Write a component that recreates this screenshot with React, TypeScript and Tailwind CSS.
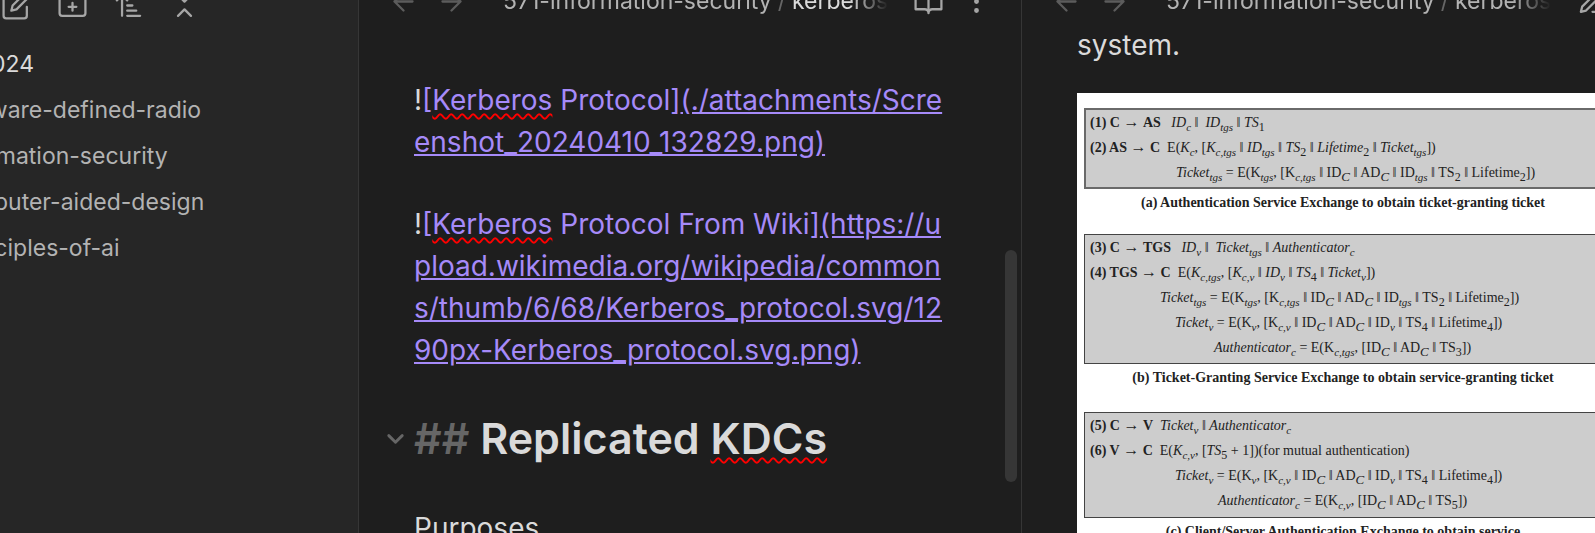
import type { ReactNode } from 'react';

const Icon = ({ children }: { children: ReactNode }) => (
  <svg
    viewBox="0 0 24 24"
    fill="none"
    stroke="currentColor"
    strokeWidth="1.75"
    strokeLinecap="round"
    strokeLinejoin="round"
    className="size-[31px] shrink-0"
    aria-hidden="true"
  >
    {children}
  </svg>
);

const IconButton = ({ label, faint, children }: { label: string; faint?: boolean; children: ReactNode }) => (
  <button type="button" aria-label={label} className={faint ? 'text-[#5c5c5c]' : 'text-[#a6a6a6]'}>
    <Icon>{children}</Icon>
  </button>
);

const folders = [
  '541-software-defined-radio',
  '571-information-security',
  '551-computer-aided-design',
  '520-principles-of-ai',
];

function Sidebar() {
  return (
    <aside className="w-[359px] shrink-0 overflow-hidden border-r border-[#363636] bg-[#262626]">
      <div className="-mt-[10px] flex gap-[25px] pl-px">
        <IconButton label="New note">
          <path d="M11 4H4a2 2 0 0 0-2 2v14a2 2 0 0 0 2 2h14a2 2 0 0 0 2-2v-7" />
          <path d="M18.5 2.5a2.12 2.12 0 0 1 3 3L12 15l-4 1 1-4Z" />
        </IconButton>
        <IconButton label="New folder">
          <path d="M4 20h16a2 2 0 0 0 2-2V8a2 2 0 0 0-2-2h-7.93a2 2 0 0 1-1.66-.9l-.82-1.2A2 2 0 0 0 7.93 3H4a2 2 0 0 0-2 2v13c0 1.1.9 2 2 2Z" />
          <path d="M12 10v6M9 13h6" />
        </IconButton>
        <IconButton label="Change sort order">
          <path d="m3 8 4-4 4 4M7 4v16M11 12h4M11 16h7M11 20h10" />
        </IconButton>
        <IconButton label="Collapse all">
          <path d="m7 20 5-5 5 5M7 4l5 5 5-5" />
        </IconButton>
      </div>
      <nav className="mt-5 text-[23px] whitespace-nowrap text-[#b3b3b3]">
        <a href="#2024" className="-ml-[23px] flex h-[46px] items-center text-[#dadada]">
          2024
        </a>
        <ul className="-ml-[101px]">
          {folders.map((name) => (
            <li key={name}>
              <a href={`#${name}`} className="flex h-[46px] items-center">
                {name}
              </a>
            </li>
          ))}
        </ul>
      </nav>
    </aside>
  );
}

function PaneHeader({ active, children }: { active?: boolean; children: ReactNode }) {
  return (
    <header className="-mt-[23px] flex h-12 shrink-0 items-center pr-[29px] pl-[29px]">
      <div className="flex gap-[17px]">
        <IconButton label="Back" faint>
          <path d="m12 19-7-7 7-7M19 12H5" />
        </IconButton>
        <IconButton label="Forward" faint>
          <path d="m12 5 7 7-7 7M5 12h14" />
        </IconButton>
      </div>
      <div className="ml-9 w-[385px] overflow-hidden mask-r-from-90% text-[23px] whitespace-nowrap text-[#b3b3b3]">
        <a href="#571">571-information-security</a>
        <span className="mx-1.5 text-[#666666]">/</span>
        <span className={active ? 'text-[#dadada]' : 'text-[#b3b3b3]'}>kerberos</span>
      </div>
      <div className="ml-auto flex gap-[17px]">
        {children}
        <IconButton label="More options">
          <circle cx="12" cy="12" r="1" />
          <circle cx="12" cy="5" r="1" />
          <circle cx="12" cy="19" r="1" />
        </IconButton>
      </div>
    </header>
  );
}

const Misspelled = ({ children }: { children: ReactNode }) => (
  <span className="underline decoration-[#ff0000] decoration-wavy decoration-[2px] underline-offset-3 [text-decoration-skip-ink:none]">
    {children}
  </span>
);

function EditorPane() {
  return (
    <section className="relative flex min-w-[663px] flex-1 flex-col overflow-hidden border-r border-[#363636]">
      <PaneHeader active>
        <IconButton label="Reading view">
          <path d="M2 3h6a4 4 0 0 1 4 4v14a3 3 0 0 0-3-3H2zM22 3h-6a4 4 0 0 0-4 4v14a3 3 0 0 1 3-3h7z" />
        </IconButton>
      </PaneHeader>
      <div className="pt-[54px] pr-[74px] pl-[55px] text-[28px] leading-[42px] whitespace-nowrap">
        <p>
          !
          <span className="text-[#a68af9]">
            [<Misspelled>Kerberos</Misspelled> Protocol]
            <a href="#attachment" className="underline">
              (./attachments/Scre
              <br />
              enshot_20240410_132829.png)
            </a>
          </span>
        </p>
        <p className="mt-10">
          !
          <span className="text-[#a68af9]">
            [<Misspelled>Kerberos</Misspelled> Protocol From Wiki]
            <a href="#wiki" className="underline">
              (https://u
              <br />
              pload.wikimedia.org/wikipedia/common
              <br />
              s/thumb/6/68/Kerberos_protocol.svg/12
              <br />
              90px-Kerberos_protocol.svg.png)
            </a>
          </span>
        </p>
        <div className="mt-10 -ml-[30px] flex items-center">
          <button type="button" aria-label="Fold section" className="mr-[7px] text-[#666666]">
            <svg viewBox="0 0 24 24" fill="none" stroke="currentColor" strokeWidth="3" strokeLinecap="round" strokeLinejoin="round" className="size-[23px]" aria-hidden="true">
              <path d="m5 9 7 7 7-7" />
            </svg>
          </button>
          <h2 className="text-[43px] leading-[54px] font-semibold">
            <span className="text-[#666666]">##</span> Replicated <Misspelled>KDCs</Misspelled>
          </h2>
        </div>
        <p className="mt-[42px]">Purposes</p>
      </div>
      <div className="absolute top-[250px] right-1 h-[232px] w-3 rounded-md bg-[#363636]" />
    </section>
  );
}

// Notation: *bold*, /italic/, _{italic subscript}, ^{upright subscript}, ~{large italic subscript}
const TOKEN = /(→|\*[^*]+\*|\/[^/]+\/|[_^~]\{[^}]+\})/;

function Formula({ text }: { text: string }) {
  return (
    <>
      {text.split(TOKEN).map((part, i) => {
        if (part === '→') return <b key={i} className="text-[16px] leading-none">→</b>;
        if (part.startsWith('*')) return <b key={i}>{part.slice(1, -1)}</b>;
        if (part.startsWith('/')) return <i key={i}>{part.slice(1, -1)}</i>;
        if (part.startsWith('_{'))
          return <i key={i} className="align-[-4px] text-[11px] leading-none">{part.slice(2, -1)}</i>;
        if (part.startsWith('~{'))
          return <i key={i} className="align-[-4px] text-[13px] leading-none">{part.slice(2, -1)}</i>;
        if (part.startsWith('^{'))
          return <span key={i} className="align-[-4px] text-[12px] leading-none">{part.slice(2, -1)}</span>;
        return part;
      })}
    </>
  );
}

type Row = { text: string; indent: string };

const exchanges: { rows: Row[]; caption: string; box: string }[] = [
  {
    box: 'mt-[15px] border-2 border-[#6a6a6a] pb-[2px]',
    caption: '(a) Authentication Service Exchange to obtain ticket-granting ticket',
    rows: [
      { indent: 'pl-1', text: '*(1) C* → *AS*   /ID/_{c} ‖  /ID/_{tgs} ‖ /TS/^{1}' },
      { indent: 'pl-1', text: '*(2) AS* → *C*  E(/K/_{c}, [/K/_{c,tgs} ‖ /ID/_{tgs} ‖ /TS/^{2} ‖ /Lifetime/^{2} ‖ /Ticket/_{tgs}])' },
      { indent: 'pl-[90px]', text: '/Ticket/_{tgs} = E(K_{tgs}, [K_{c,tgs} ‖ ID~{C} ‖ AD~{C} ‖ ID_{tgs} ‖ TS^{2} ‖ Lifetime^{2}])' },
    ],
  },
  {
    box: 'mt-[19px] border border-[#444444] pb-[3px]',
    caption: '(b) Ticket-Granting Service Exchange to obtain service-granting ticket',
    rows: [
      { indent: 'pl-[5px]', text: '*(3) C* → *TGS*   /ID/_{v} ‖  /Ticket/_{tgs} ‖ /Authenticator/_{c}' },
      { indent: 'pl-[5px]', text: '*(4) TGS* → *C*  E(/K/_{c,tgs}, [/K/_{c,v} ‖ /ID/_{v} ‖ /TS/^{4} ‖ /Ticket/_{v}])' },
      { indent: 'pl-[75px]', text: '/Ticket/_{tgs} = E(K_{tgs}, [K_{c,tgs} ‖ ID~{C} ‖ AD~{C} ‖ ID_{tgs} ‖ TS^{2} ‖ Lifetime^{2}])' },
      { indent: 'pl-[90px]', text: '/Ticket/_{v} = E(K_{v}, [K_{c,v} ‖ ID~{C} ‖ AD~{C} ‖ ID_{v} ‖ TS^{4} ‖ Lifetime^{4}])' },
      { indent: 'pl-[129px]', text: '/Authenticator/_{c} = E(K_{c,tgs}, [ID~{C} ‖ AD~{C} ‖ TS^{3}])' },
    ],
  },
  {
    box: 'mt-[22px] border border-[#444444] pb-1',
    caption: '(c) Client/Server Authentication Exchange to obtain service',
    rows: [
      { indent: 'pl-[5px]', text: '*(5) C* → *V*  /Ticket/_{v} ‖ /Authenticator/_{c}' },
      { indent: 'pl-[5px]', text: '*(6) V* → *C*  E(/K/_{c,v}, [/TS/^{5} + 1])(for mutual authentication)' },
      { indent: 'pl-[90px]', text: '/Ticket/_{v} = E(K_{v}, [K_{c,v} ‖ ID~{C} ‖ AD~{C} ‖ ID_{v} ‖ TS^{4} ‖ Lifetime^{4}])' },
      { indent: 'pl-[133px]', text: '/Authenticator/_{c} = E(K_{c,v}, [ID~{C} ‖ AD~{C} ‖ TS^{5}])' },
    ],
  },
];

function PreviewPane() {
  return (
    <section className="flex min-w-[663px] flex-1 flex-col overflow-hidden">
      <PaneHeader>
        <IconButton label="Edit view">
          <path d="M12 20h9M16.5 3.5a2.12 2.12 0 0 1 3 3L7 19l-4 1 1-4Z" />
        </IconButton>
      </PaneHeader>
      <div className="pr-[76px] pl-[55px]">
        <p className="-mt-px text-[28px] leading-[42px]">system.</p>
        <figure className="mt-[27px] flow-root bg-white px-[7px] pb-4 font-['Liberation_Serif',serif] text-[14px] leading-[25px] whitespace-pre text-[#222222]">
          {exchanges.map(({ rows, caption, box }) => (
            <div key={caption}>
              <div className={`bg-[#cdcdcd] ${box}`}>
                {rows.map(({ text, indent }, i) => (
                  <p key={i} className={`h-[25px] ${indent}`}>
                    <Formula text={text} />
                  </p>
                ))}
              </div>
              <p className="mt-px text-center font-bold">{caption}</p>
            </div>
          ))}
        </figure>
      </div>
    </section>
  );
}

export default function App() {
  return (
    <main className="flex h-screen overflow-hidden bg-[#1e1e1e] font-['Inter',sans-serif] text-[#dadada]">
      <Sidebar />
      <EditorPane />
      <PreviewPane />
    </main>
  );
}
